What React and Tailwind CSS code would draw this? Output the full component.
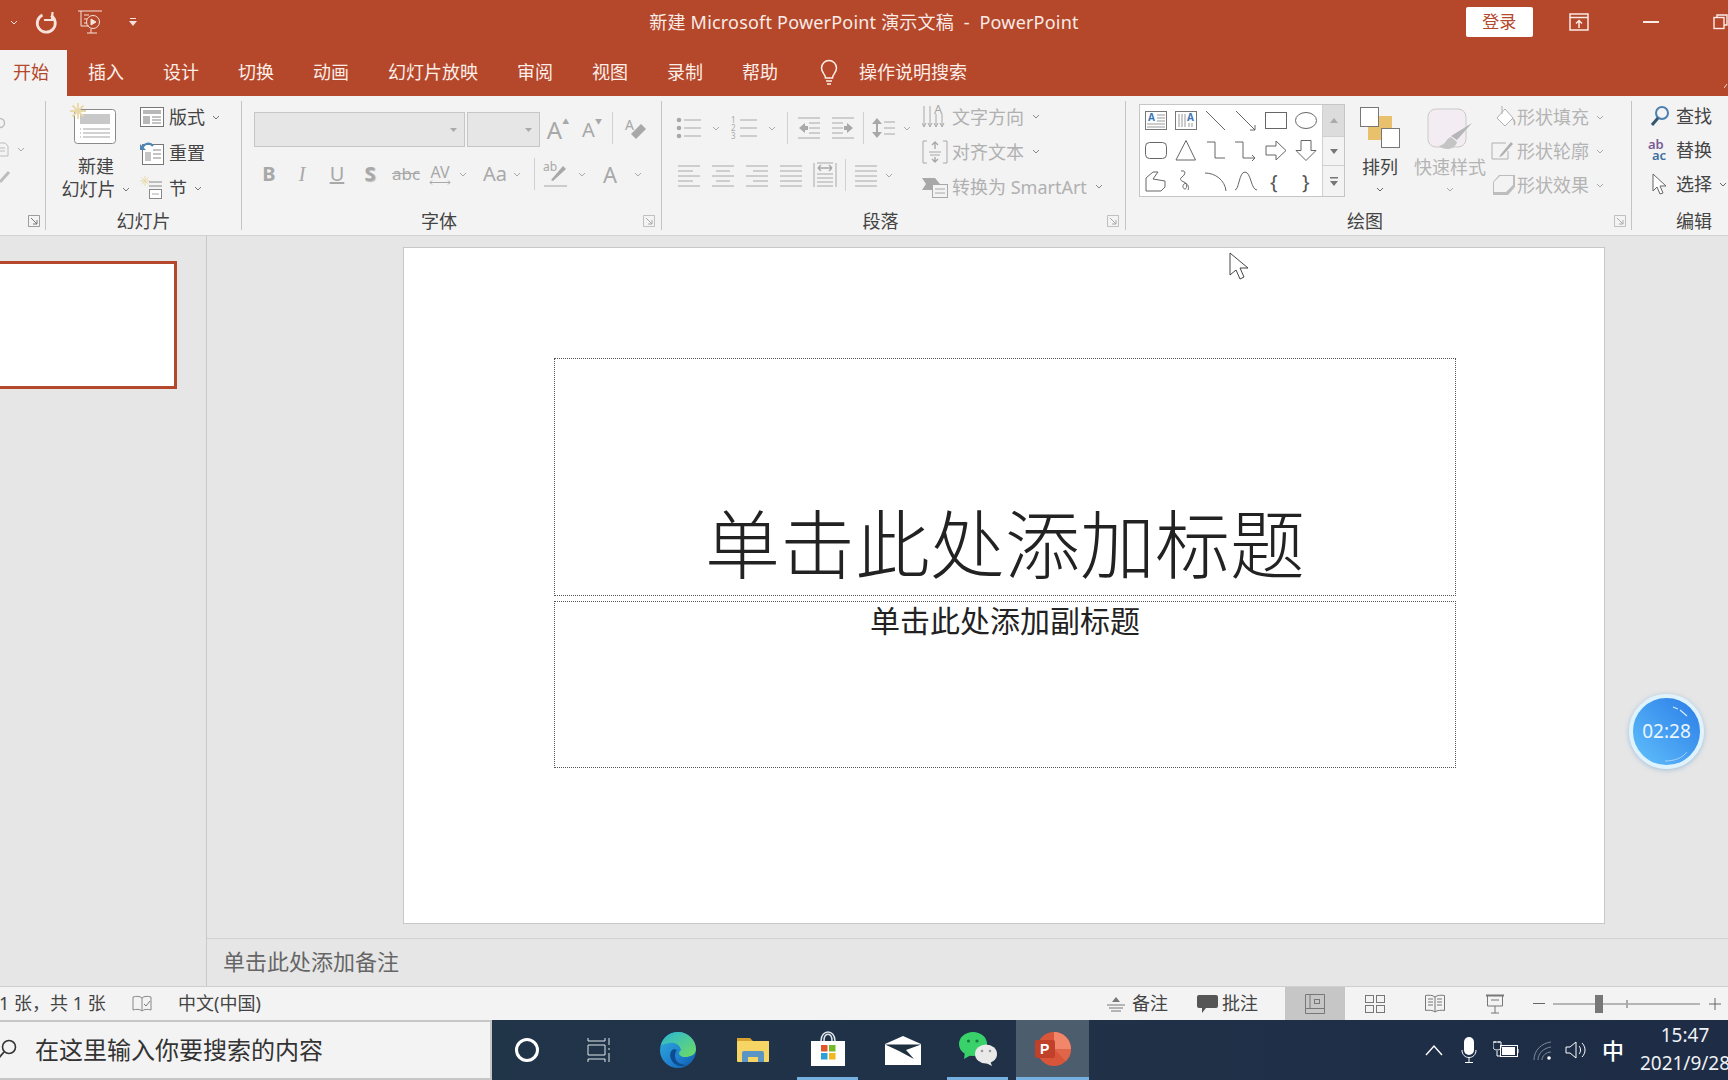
import React from 'react';

const Ico = ({ w = 24, h = 24, className = '', children }) => (
  <svg width={w} height={h} viewBox={`0 0 ${w} ${h}`} fill="none" stroke="currentColor" strokeWidth="1" className={`shrink-0 ${className}`}>
    {children}
  </svg>
);

const Chev = ({ className = 'text-[#777]', w = 16 }) => (
  <span className={`flex justify-center shrink-0 ${className}`} style={{ width: w }}>
    <svg width="8" height="5" viewBox="0 0 8 5" fill="none" stroke="currentColor"><path d="M1 1l3 3 3-3" /></svg>
  </span>
);

const Launcher = ({ className = 'text-[#aaa]' }) => (
  <Ico w={12} h={12} className={className}>
    <path d="M.5 .5h11v11h-11z" opacity=".7" /><path d="M3 3l6 6M9 5v4H5" />
  </Ico>
);

const Sep = ({ className = '' }) => <div className={`w-px bg-[#d0d0d0] shrink-0 ${className}`} />;
const GroupSep = () => <div className="w-px h-[129px] mt-[5px] bg-[#c4c4c4] shrink-0" />;

const GroupLabel = ({ children, launcher, className = '' }) => (
  <div className="h-[28px] flex items-center mt-auto">
    <div className={`flex-1 text-center text-[18px] leading-none text-[#444] ${className}`}>{children}</div>
    {launcher}
  </div>
);

const Lines = ({ rows, w = 24 }) => (
  <Ico w={w} h={24} className="text-[#a8a8a8]">
    {rows.map((r, i) => <path key={i} d={`M${r[0]} ${r[2]}H${r[1]}`} />)}
  </Ico>
);

// ---------- icons of the ribbon ----------
const NewSlideIcon = () => (
  <Ico w={48} h={42}>
    <rect x="4.5" y="6.5" width="41" height="34" rx="3" fill="#fff" stroke="#8a8a8a" />
    <rect x="10" y="11" width="30" height="10" fill="#c8c8c8" stroke="none" />
    <path d="M13 26h27M13 30h27M13 34h27M10 26h1M10 30h1M10 34h1" stroke="#a5a5a5" />
    <path d="M8 0v16M0 8h16M2.5 2.5l11 11M13.5 2.5l-11 11" stroke="#ead9a8" strokeWidth="1.800" />
  </Ico>
);
const LayoutIcon = () => (
  <Ico w={24} h={20}>
    <rect x=".5" y=".5" width="23" height="19" fill="#fff" stroke="#777" />
    <rect x="3" y="3" width="18" height="4" fill="#b8b8b8" stroke="none" />
    <rect x="3" y="9" width="7" height="8" fill="#b8b8b8" stroke="none" />
    <path d="M12 10h9M12 13h9M12 16h9" stroke="#888" />
  </Ico>
);
const ResetIcon = () => (
  <Ico w={24} h={24}>
    <rect x="2.5" y="3.5" width="21" height="20" fill="#fff" stroke="#777" />
    <path d="M13 9h8M13 13h8M13 17h8" stroke="#888" />
    <rect x="5" y="11" width="6" height="9" fill="#c5c5c5" stroke="none" />
    <path d="M2 8c2-6 8-7 11-3" stroke="#4f86b8" strokeWidth="2.200" /><path d="M0 3v6h6z" fill="#4f86b8" stroke="none" />
  </Ico>
);
const SectionIcon = () => (
  <Ico w={24} h={24}>
    <path d="M5 0v10M0 5h10M1.5 1.5l7 7M8.500 1.500l-7 7" stroke="#ead9a8" />
    <path d="M9 6h13M9 10h13" stroke="#888" />
    <rect x="9.500" y="13.500" width="12" height="9" fill="#fff" stroke="#888" /><path d="M12 18h7" stroke="#aaa" />
  </Ico>
);

const BulletIcon = () => (
  <Ico w={28} h={24} className="text-[#a8a8a8]">
    <circle cx="4" cy="4" r="2.300" fill="currentColor" stroke="none" /><circle cx="4" cy="12" r="2.300" fill="currentColor" stroke="none" /><circle cx="4" cy="20" r="2.300" fill="currentColor" stroke="none" />
    <path d="M9 4h17M9 12h17M9 20h17" />
  </Ico>
);
const NumberIcon = () => (
  <Ico w={28} h={24} className="text-[#a8a8a8]">
    <path d="M9 4h17M9 12h17M9 20h17" />
    <text x="0" y="7" fontSize="8" fill="currentColor" stroke="none">1</text>
    <text x="0" y="15" fontSize="8" fill="currentColor" stroke="none">2</text>
    <text x="0" y="23" fontSize="8" fill="currentColor" stroke="none">3</text>
  </Ico>
);
const IndentIcon = ({ flip }) => (
  <Ico w={24} h={24} className="text-[#a8a8a8]">
    <g transform={flip ? 'translate(24 0) scale(-1 1)' : undefined}>
      <path d="M1 2h22M12 7h11M12 12h11M12 17h11M1 22h22" />
      <path d="M2 12l6-5v3h3v4H8v3z" fill="currentColor" stroke="none" />
    </g>
  </Ico>
);
const SpacingIcon = () => (
  <Ico w={24} h={24} className="text-[#a8a8a8]">
    <path d="M5 4v16" strokeWidth="2" /><path d="M0 8l5-6 5 6zM0 16l5 6 5-6z" fill="currentColor" stroke="none" />
    <path d="M12 6h11M12 12h11M12 18h11" />
  </Ico>
);
const DistributeIcon = () => (
  <Ico w={24} h={26} className="text-[#a8a8a8]">
    <path d="M1 1v24M23 1v24M4 1h16M4 12h16M4 16h16M4 20h16M4 24h16" />
    <path d="M5 6h14M5 6l3-3M5 6l3 3M19 6l-3-3M19 6l-3 3" strokeWidth="1.400" />
  </Ico>
);
const TextDirIcon = () => (
  <Ico w={26} h={26} className="text-[#a8a8a8]">
    <path d="M2 2v20M8 2v20M14 10v12M20 10v12M0 19l2 4 2-4M6 19l2 4 2-4M12 19l2 4 2-4M18 19l2 4 2-4" />
    <text x="12" y="10" fontSize="13" fill="currentColor" stroke="none">A</text>
  </Ico>
);
const AlignTextIcon = () => (
  <Ico w={26} h={24} className="text-[#a8a8a8]">
    <path d="M5 1H1v22h4M21 1h4v22h-4M7 12h12M8 15h10" />
    <path d="M13 2v7M10 5l3-3 3 3M13 22v-5M10 19l3 3 3-3" strokeWidth="1.400" />
  </Ico>
);
const SmartArtIcon = () => (
  <Ico w={26} h={22} className="text-[#a8a8a8]">
    <path d="M0 2h13l5 6-5 6H0l4-6z" fill="currentColor" stroke="none" />
    <rect x="10.500" y="8.500" width="15" height="13" fill="#f3f3f3" /><path d="M13 13h10M13 17h10" />
  </Ico>
);

const shapes = [
  <g key="a"><rect x="2.500" y="3.500" width="21" height="18" fill="#fff" stroke="#777" /><text x="5" y="13" fontSize="10" fontWeight="700" fill="#3f76b8" stroke="none">A</text><path d="M14 7h8M14 10h8M14 13h8M4 16h18M4 19h18" stroke="#999" /></g>,
  <g key="b"><rect x="2.500" y="3.500" width="21" height="18" fill="#fff" stroke="#777" /><text x="14" y="13" fontSize="10" fontWeight="700" fill="#3f76b8" stroke="none">A</text><path d="M6 6v13M9 6v13M12 6v13M16 15v4M19 15v4" stroke="#999" /></g>,
  <path key="c" d="M3 3l19 19" />,
  <g key="d"><path d="M3 3l19 19" /><path d="M17 22h5v-5" /></g>,
  <rect key="e" x="2.500" y="4.500" width="21" height="16" />,
  <ellipse key="f" cx="13" cy="12.500" rx="10.500" ry="8" />,
  <rect key="g" x="2.500" y="4.500" width="21" height="16" rx="4" />,
  <path key="h" d="M13 2.500L22.500 22H3z" />,
  <path key="i" d="M4 4h8v16h10" />,
  <g key="j"><path d="M2 4h8v16h12M19 17l3 3-3 3" /></g>,
  <path key="k" d="M3 8h10V3l10 9.500L13 22v-5H3z" />,
  <path key="l" d="M8 2.500h10v10h5l-10 10-10-10h5z" />,
  <path key="m" d="M3 22V9l7-6h5l-5 7 12 2v6l-4 4z" />,
  <path key="n" d="M8 2c6-1 4 4 1 6-3 2-1 4 2 5 4 1 3 7 1 7s-3-3-1-5 6 2 4 6" />,
  <path key="o" d="M2 4c10 0 20 7 21 18" />,
  <path key="p" d="M2 21C6 21 6 3 12 3s6 18 12 18" />,
  <text key="q" x="7" y="20" fontSize="20" fill="#555" stroke="none">{'{'}</text>,
  <text key="r" x="9" y="20" fontSize="20" fill="#555" stroke="none">{'}'}</text>,
];

const Gallery = () => (
  <div className="flex w-[206px] h-[93px] ml-[13px] bg-white border border-[#c6c6c6] shrink-0">
    <div className="grid grid-cols-6 grid-rows-3 flex-1 px-[1px] text-[#666]">
      {shapes.map((s, i) => (
        <div key={i} className="flex items-center justify-center">
          <Ico w={26} h={24}>{s}</Ico>
        </div>
      ))}
    </div>
    <div className="w-[22px] flex flex-col border-l border-[#d0d0d0] bg-[#f3f3f3] text-[#777]">
      <div className="h-[32px] bg-[#dcdcdc] flex items-center justify-center border-b border-[#d0d0d0] text-[#aaa]">
        <svg width="8" height="5" viewBox="0 0 8 5" fill="currentColor"><path d="M4 0l4 5H0z" /></svg>
      </div>
      <div className="h-[29px] flex items-center justify-center border-b border-[#d0d0d0]">
        <svg width="8" height="5" viewBox="0 0 8 5" fill="currentColor"><path d="M4 5l4-5H0z" /></svg>
      </div>
      <div className="flex-1 flex items-center justify-center">
        <svg width="8" height="9" viewBox="0 0 8 9" fill="currentColor"><path d="M0 0h8v1.500H0zM4 9l4-5H0z" /></svg>
      </div>
    </div>
  </div>
);

const ArrangeIcon = () => (
  <Ico w={40} h={41}>
    <rect x="8" y="9" width="24" height="24" fill="#e9c06c" stroke="none" />
    <rect x=".5" y=".5" width="18" height="19" fill="#fff" stroke="#777" />
    <rect x="21.500" y="21.500" width="18" height="19" fill="#fff" stroke="#777" />
  </Ico>
);
const QuickStyleIcon = () => (
  <Ico w={46} h={47}>
    <rect x="1" y="1" width="38" height="38" rx="8" fill="#f3edf3" stroke="#c9c9c9" />
    <path d="M45 15L30 32l-6-4z" fill="#b6b6b6" stroke="none" />
    <path d="M24 29c-5 1-5 8-12 9 6 5 16 4 18-4z" fill="#c4c4c4" stroke="none" />
  </Ico>
);
const FillIcon = () => (
  <Ico w={26} h={24} className="text-[#b0b0b0]">
    <path d="M14 4l8 9-8 8-8-8z" fill="#fff" /><path d="M11 1v8" /><path d="M22 14c2 2 2 5 1 6" strokeWidth="1.500" />
  </Ico>
);
const OutlineIcon = () => (
  <Ico w={26} h={24} className="text-[#b0b0b0]">
    <path d="M15 4H1v16h16v-8" /><path d="M10 15l-2 3 3-1L22 5l-2-2z" fill="currentColor" stroke="none" />
  </Ico>
);
const EffectIcon = () => (
  <Ico w={26} h={24} className="text-[#b0b0b0]">
    <path d="M8 2h16v12l-7 8H2V9z" fill="#bdbdbd" stroke="none" /><path d="M9 3h13v9l-7 7H3V9z" fill="#f3f3f3" stroke="none" />
  </Ico>
);

// ---------- tabs ----------
const tabs = ['插入', '设计', '切换', '动画', '幻灯片放映', '审阅', '视图', '录制', '帮助'];

const TitleBar = () => (
  <div className="h-[50px] grid grid-cols-[minmax(0,1fr)_auto_minmax(0,1fr)] items-center pb-[6px] text-white shrink-0">
    <div className="flex items-center text-[#f6e3dc]">
      <Chev w={10} className="ml-[9px] text-[#f6e3dc]" />
      <Ico w={24} h={24} className="ml-[15px]">
        <path d="M8.500 5A9 9 0 1 0 17 5.500" strokeWidth="2.800" /><path d="M18.500 2l-.5 8h-8" strokeWidth="2.200" />
      </Ico>
      <Ico w={26} h={26} className="ml-[19px]">
        <path d="M1 2h24M4 2v15h8M7 6h5M7 10h3M7 14h3M10 24h10M14 20v4" /><circle cx="16" cy="13" r="6.500" /><path d="M14 10l5 3-5 3z" fill="currentColor" />
      </Ico>
      <span className="ml-[25px]">
        <svg width="10" height="11" viewBox="0 0 10 11" fill="currentColor"><path d="M2 1h6v1H2zM1 4h8L5 9z" /></svg>
      </span>
    </div>
    <div className="text-[18px] tracking-[0.2px] leading-none text-[#f9ebe6] whitespace-pre">新建 Microsoft PowerPoint 演示文稿  -  PowerPoint</div>
    <div className="flex items-center pl-[387px] whitespace-nowrap text-[#f9ebe6]">
      <div className="w-[67px] h-[30px] bg-white rounded-[2px] flex items-center justify-center text-[17px] text-[#b5472a] shrink-0">登录</div>
      <Ico w={20} h={18} className="ml-[36px]">
        <path d="M1 1h18v16H1zM1 4.500h18" strokeWidth="1.500" /><path d="M10 15V8M7 10.500l3-3 3 3" strokeWidth="1.500" />
      </Ico>
      <div className="w-[16px] h-[2px] bg-current ml-[54px] shrink-0" />
      <Ico w={16} h={16} className="ml-[54px]">
        <path d="M4 3V1h10v10h-3" strokeWidth="1.400" /><rect x="1" y="3.500" width="10" height="11" strokeWidth="1.400" />
      </Ico>
    </div>
  </div>
);

const TabBar = () => (
  <div className="h-[46px] flex items-stretch text-[18px] text-[#fbeee9] shrink-0">
    <div className="w-[67px] pl-[13px] pb-[2px] flex items-center bg-[#f3f3f3] text-[#b5472a]">开始</div>
    <div className="flex items-center gap-[39px] ml-[21px] pb-[2px]">
      {tabs.map((t) => <span key={t}>{t}</span>)}
    </div>
    <div className="flex items-center ml-[39px] pb-[2px]">
      <Ico w={24} h={28}>
        <path d="M8.500 20c0-4-4-5-4-10a7.500 7.500 0 0 1 15 0c0 5-4 6-4 10zM9 23h6M10 26h4" strokeWidth="1.500" />
      </Ico>
      <span className="ml-[18px]">操作说明搜索</span>
    </div>
    <svg className="ml-auto mt-[33px]" width="4" height="6" viewBox="0 0 4 6" fill="none" stroke="#f0d9d0"><path d="M0 5l3-4" /></svg>
  </div>
);

const TextRow = ({ icon, label, chev = true, className = '' }) => (
  <div className="flex items-center h-[35px]">
    <span className="flex items-center justify-center w-[24px] shrink-0">{icon}</span>
    <span className={`ml-[5px] text-[18px] leading-none whitespace-nowrap ${className}`}>{label}</span>
    {chev && <Chev w={24} className="text-[#888]" />}
  </div>
);

const Glyph = ({ w, className = '', children }) => (
  <span className={`flex items-center justify-center shrink-0 ${className}`} style={{ width: w }}>{children}</span>
);

const ShapeRow = ({ icon, label }) => (
  <div className="flex items-center h-[34px]">
    <span className="pl-[3px] shrink-0">{icon}</span>
    <span className="text-[18px] leading-none whitespace-nowrap">{label}</span>
    <Chev w={22} className="text-[#aaa]" />
  </div>
);

const Ribbon = () => (
  <div className="h-[140px] bg-[#f3f3f3] border-b border-[#d2d2d2] flex shrink-0 text-[#444]">
    {/* clipped clipboard group */}
    <div className="w-[45px] flex flex-col shrink-0 text-[#bdbdbd]">
      <Ico w={6} h={12} className="mt-[21px]"><circle cx="0" cy="6" r="4.500" strokeWidth="1.500" /></Ico>
      <div className="flex items-center mt-[11px] h-[18px]">
        <Ico w={12} h={18}><path d="M0 3h5l3 3v10H0M0 8h5M0 11h5" /></Ico>
        <Chev className="ml-[1px] text-[#aaa]" />
      </div>
      <Ico w={12} h={14} className="mt-[12px]"><path d="M0 12l9-10" strokeWidth="3" /></Ico>
      <GroupLabel launcher={<span className="mr-[5px]"><Launcher className="text-[#777]" /></span>} />
    </div>
    <GroupSep />

    {/* 幻灯片 */}
    <div className="w-[195px] flex flex-col shrink-0">
      <div className="flex">
        <div className="w-[100px] flex flex-col items-center pt-[7px] shrink-0">
          <span className="-ml-[5px]"><NewSlideIcon /></span>
          <span className="text-[18px] leading-[23px] mt-[10px]">新建</span>
          <span className="flex items-center text-[18px] leading-[23px] ml-[5px]">幻灯片<Chev w={20} /></span>
        </div>
        <div className="flex flex-col pt-[3px] -ml-[6px]">
          <div className="flex items-center h-[36px]"><LayoutIcon /><span className="ml-[5px] text-[18px] leading-none">版式</span><Chev w={22} /></div>
          <div className="flex items-center h-[35px]"><ResetIcon /><span className="ml-[5px] text-[18px] leading-none">重置</span></div>
          <div className="flex items-center h-[36px]"><SectionIcon /><span className="ml-[5px] text-[18px] leading-none">节</span><Chev w={22} /></div>
        </div>
      </div>
      <GroupLabel>幻灯片</GroupLabel>
    </div>
    <GroupSep />

    {/* 字体 */}
    <div className="w-[419px] flex flex-col shrink-0">
      <div className="pl-[12px] pt-[16px] text-[#a8a8a8]">
        <div className="flex h-[35px]">
          <div className="w-[211px] bg-[#e6e6e6] border border-[#c6c6c6] flex items-center justify-end pr-[7px] shrink-0">
            <svg width="7" height="4" viewBox="0 0 7 4" fill="#aaa"><path d="M0 0h7L3.500 4z" /></svg>
          </div>
          <div className="w-[73px] ml-[2px] bg-[#e6e6e6] border border-[#c6c6c6] flex items-center justify-end pr-[7px] shrink-0">
            <svg width="7" height="4" viewBox="0 0 7 4" fill="#aaa"><path d="M0 0h7L3.500 4z" /></svg>
          </div>
          <Glyph w={32} className="ml-[2px] text-[24px] leading-none">A<sup className="text-[7px] -mt-[8px]">▲</sup></Glyph>
          <Glyph w={32} className="ml-[2px] text-[20px] leading-none">A<sup className="text-[7px] -mt-[8px]">▼</sup></Glyph>
          <Sep className="ml-[4px] h-[32px]" />
          <Ico w={24} h={26} className="ml-[11px] mt-[5px]">
            <text x="1" y="13" fontSize="14" fill="currentColor" stroke="none">A</text>
            <path d="M12 22l10-10-5-5-10 10z" fill="currentColor" stroke="none" />
          </Ico>
        </div>
        <div className="flex items-center h-[34px] mt-[10px]">
          <Glyph w={30} className="text-[20px] font-bold">B</Glyph>
          <Glyph w={36} className="text-[20px] italic font-['Liberation_Serif',serif]">I</Glyph>
          <Glyph w={34} className="text-[20px] underline">U</Glyph>
          <Glyph w={32} className="text-[20px] font-bold [text-shadow:1px_1px_1px_#bbb]">S</Glyph>
          <Glyph w={40} className="text-[17px] line-through">abc</Glyph>
          <Glyph w={28} className="text-[16px] leading-none flex-col">AV<svg width="22" height="5" viewBox="0 0 22 5" fill="none" stroke="currentColor"><path d="M1 2.500h20M3 .5l-2 2 2 2M19 .5l2 2-2 2" /></svg></Glyph>
          <Chev w={18} className="text-[#aaa]" />
          <Glyph w={24} className="ml-[11px] text-[20px]">Aa</Glyph>
          <Chev w={20} className="text-[#aaa]" />
          <Sep className="ml-[7px] h-[32px]" />
          <Ico w={24} h={28} className="ml-[8px]">
            <text x="0" y="11" fontSize="12" fill="currentColor" stroke="none">ab</text>
            <path d="M8 20L20 6l3 3-13 12z" fill="currentColor" stroke="none" /><path d="M1 26h23" strokeWidth="2" stroke="#ccc" />
          </Ico>
          <Chev w={20} className="ml-[5px] text-[#aaa]" />
          <Glyph w={24} className="ml-[6px] text-[22px]">A</Glyph>
          <Chev w={20} className="ml-[6px] text-[#aaa]" />
        </div>
      </div>
      <GroupLabel className="pr-[7px]" launcher={<span className="mr-[6px]"><Launcher /></span>}>字体</GroupLabel>
    </div>
    <GroupSep />

    {/* 段落 */}
    <div className="w-[463px] flex flex-col shrink-0">
      <div className="flex">
        <div className="w-[261px] pt-[16px] shrink-0">
          <div className="flex items-center h-[32px]">
            <span className="ml-[13px]"><BulletIcon /></span><Chev className="ml-[5px] text-[#aaa]" />
            <span className="ml-[7px]"><NumberIcon /></span><Chev className="ml-[5px] text-[#aaa]" />
            <Sep className="ml-[7px] h-[32px]" />
            <span className="ml-[9px]"><IndentIcon /></span>
            <span className="ml-[10px]"><IndentIcon flip /></span>
            <Sep className="ml-[8px] h-[32px]" />
            <span className="ml-[8px]"><SpacingIcon /></span><Chev className="ml-[3px] text-[#aaa]" />
          </div>
          <div className="flex items-center h-[32px] mt-[15px]">
            <span className="ml-[15px]"><Lines rows={[[1, 23, 3], [1, 16, 8], [1, 23, 13], [1, 16, 18], [1, 23, 23]]} /></span>
            <span className="ml-[10px]"><Lines rows={[[1, 23, 3], [5, 19, 8], [1, 23, 13], [5, 19, 18], [1, 23, 23]]} /></span>
            <span className="ml-[10px]"><Lines rows={[[1, 23, 3], [8, 23, 8], [1, 23, 13], [8, 23, 18], [1, 23, 23]]} /></span>
            <span className="ml-[10px]"><Lines rows={[[1, 23, 3], [1, 23, 8], [1, 23, 13], [1, 23, 18], [1, 23, 23]]} /></span>
            <span className="ml-[10px]"><DistributeIcon /></span>
            <Sep className="ml-[8px] h-[32px]" />
            <span className="ml-[8px]"><Lines rows={[[1, 23, 3], [1, 23, 8], [1, 23, 13], [1, 23, 18], [1, 23, 23]]} /></span>
            <Chev className="ml-[3px] text-[#aaa]" />
          </div>
        </div>
        <div className="pt-[3px] text-[#b0b0b0] flex flex-col">
          <TextRow icon={<TextDirIcon />} label="文字方向" />
          <TextRow icon={<AlignTextIcon />} label="对齐文本" />
          <TextRow icon={<SmartArtIcon />} label="转换为 SmartArt" />
        </div>
      </div>
      <GroupLabel className="pr-[8px]" launcher={<span className="mr-[6px]"><Launcher /></span>}>段落</GroupLabel>
    </div>
    <GroupSep />

    {/* 绘图 */}
    <div className="w-[505px] flex flex-col shrink-0">
      <div className="flex pt-[8px]">
        <Gallery />
        <div className="w-[60px] ml-[5px] flex flex-col items-center pt-[3px] shrink-0">
          <ArrangeIcon />
          <span className="text-[18px] leading-[23px] mt-[8px]">排列</span>
          <Chev className="mt-[8px] text-[#666]" />
        </div>
        <div className="w-[72px] ml-[4px] flex flex-col items-center pt-[4px] text-[#b4b4b4] shrink-0">
          <QuickStyleIcon />
          <span className="text-[18px] leading-[23px] whitespace-nowrap mt-[1px]">快速样式</span>
          <Chev className="mt-[8px] text-[#aaa]" />
        </div>
        <div className="flex flex-col -mt-[4px] ml-[2px] text-[#b4b4b4]">
          <ShapeRow icon={<FillIcon />} label="形状填充" />
          <ShapeRow icon={<OutlineIcon />} label="形状轮廓" />
          <ShapeRow icon={<EffectIcon />} label="形状效果" />
        </div>
      </div>
      <GroupLabel className="pr-[10px]" launcher={<span className="mr-[5px]"><Launcher /></span>}>绘图</GroupLabel>
    </div>
    <GroupSep />

    {/* 编辑 */}
    <div className="w-[124px] flex flex-col shrink-0">
      <div className="pl-[16px] pt-[3px] flex flex-col">
        <div className="flex items-center h-[34px]">
          <Ico w={24} h={24}><circle cx="14" cy="9" r="6" stroke="#4c7fb0" strokeWidth="2" /><path d="M10 14l-6 7" stroke="#33566f" strokeWidth="3" /></Ico>
          <span className="ml-[4px] text-[18px] leading-none">查找</span>
        </div>
        <div className="flex items-center h-[34px]">
          <span className="w-[24px] shrink-0 flex flex-col text-[13px] leading-[11px] font-semibold"><span className="text-[#7a5a96]">ab</span><span className="text-[#3d6f9e] ml-[4px]">ac</span></span>
          <span className="ml-[4px] text-[18px] leading-none">替换</span>
        </div>
        <div className="flex items-center h-[34px]">
          <Ico w={24} h={24}><path d="M5 2v17l4-4 3 7 3-1-3-7h6z" fill="#fff" stroke="#666" /></Ico>
          <span className="ml-[4px] text-[18px] leading-none">选择</span>
          <Chev w={22} className="text-[#666]" />
        </div>
      </div>
      <GroupLabel>编辑</GroupLabel>
    </div>
  </div>
);

const Workspace = () => (
  <div className="flex-1 flex min-h-0 bg-[#e6e6e6]">
    <div className="w-[207px] border-r border-[#c8c8c8] shrink-0 pt-[25px]">
      <div className="w-[177px] h-[128px] bg-white border-y-[3px] border-r-[3px] border-[#b5472a]" />
    </div>
    <div className="flex-1 flex flex-col min-w-0">
      <div className="flex-1 pt-[11px] pl-[196px]">
        <div className="w-[1202px] h-[677px] bg-white border border-[#c8c8c8] pt-[110px] pl-[150px]">
          <div className="w-[902px] h-[238px] border border-dotted border-[#555] flex items-end justify-center pb-[6px]">
            <span className="text-[75px] leading-[90px] font-light text-[#222]">单击此处添加标题</span>
          </div>
          <div className="w-[902px] h-[167px] mt-[5px] border border-dotted border-[#555] flex justify-center">
            <span className="text-[30px] leading-[38px] text-[#222]">单击此处添加副标题</span>
          </div>
        </div>
      </div>
      <div className="h-[48px] border-t border-[#d2d2d2] flex items-center pl-[16px] pb-[2px] text-[22px] text-[#666] shrink-0">单击此处添加备注</div>
    </div>
  </div>
);

const StatusBar = () => (
  <div className="h-[34px] bg-[#f3f3f3] border-t border-[#cfcfcf] flex items-stretch text-[18px] text-[#444] shrink-0">
    <div className="flex items-center -ml-[1px]">
      <span className="w-[107px] whitespace-pre">1 张，共 1 张</span>
      <Ico w={20} h={18} className="ml-[26px] text-[#888]">
        <path d="M10 3C8 1 4 1 1 2v13c3-1 7-1 9 1 2-2 6-2 9-1V2c-3-1-7-1-9 1zM10 3v13" /><path d="M12 9l2 2 4-5" stroke="#777" />
      </Ico>
      <span className="ml-[26px]">中文(中国)</span>
    </div>
    <div className="flex items-center ml-auto pr-[7px]">
      <Ico w={18} h={16}>
        <path d="M9 1l4 5H5z" fill="#777" stroke="none" /><path d="M0 9h18M2 12h14M4 15h10" stroke="#777" />
      </Ico>
      <span className="ml-[7px]">备注</span>
      <Ico w={22} h={22} className="ml-[28px]">
        <path d="M3 2h17a2 2 0 0 1 2 2v9a2 2 0 0 1-2 2H10l-4 5v-5H3a2 2 0 0 1-2-2V4a2 2 0 0 1 2-2z" fill="#555" stroke="none" />
      </Ico>
      <span className="ml-[4px]">批注</span>
      <div className="flex self-stretch ml-[27px] text-[#777]">
        <div className="w-[60px] bg-[#c6c6c6] flex items-center justify-center">
          <Ico w={20} h={20}><path d="M.5 .5h19v19H.5zM5 .5v14M.5 14.500h19" /><rect x="9.500" y="5.500" width="5" height="4" /></Ico>
        </div>
        <div className="w-[60px] flex items-center justify-center">
          <Ico w={20} h={20}><rect x=".5" y="1.500" width="8" height="7" /><rect x="11.500" y="1.500" width="8" height="7" /><rect x=".5" y="11.500" width="8" height="7" /><rect x="11.500" y="11.500" width="8" height="7" /></Ico>
        </div>
        <div className="w-[60px] flex items-center justify-center">
          <Ico w={20} h={20}><path d="M10 3C8 1 3 1 .5 1.500v15C3 16 8 16 10 18c2-2 7-2 9.500-1.500v-15C17 1 12 1 10 3zM10 3v15M3 5h5M3 8h5M3 11h5M12 5h5M12 8h5M12 11h5" /></Ico>
        </div>
        <div className="w-[60px] flex items-center justify-center">
          <Ico w={20} h={20}><path d="M1 1.500h18" strokeWidth="2" /><path d="M2.500 2v10h15V2M6 6h8M10 12v7M6 19h8" /></Ico>
        </div>
      </div>
      <div className="w-[12px] h-px bg-[#666] ml-[8px]" />
      <div className="w-[147px] h-full ml-[8px] flex items-center relative">
        <div className="w-full h-[2px] bg-[#b5b5b5]" />
        <div className="absolute left-[42px] top-[8px] w-[8px] h-[18px] bg-[#777]" />
        <div className="absolute left-[73px] top-[13px] w-[2px] h-[8px] bg-[#aaa]" />
      </div>
      <Ico w={12} h={12} className="ml-[9px] text-[#666]"><path d="M0 6h12M6 0v12" /></Ico>
    </div>
  </div>
);

const EdgeIcon = () => (
  <svg width="36" height="38" viewBox="0 0 36 38" className="shrink-0">
    <defs>
      <linearGradient id="edgeA" x1="0" y1="0" x2="1" y2="1"><stop offset="0" stopColor="#2fb0d9" /><stop offset=".6" stopColor="#1f7fd0" /><stop offset="1" stopColor="#0d5aa7" /></linearGradient>
      <linearGradient id="edgeB" x1="0" y1="0" x2="1" y2="1"><stop offset="0" stopColor="#2ab5d8" /><stop offset="1" stopColor="#6fdc5f" /></linearGradient>
    </defs>
    <circle cx="18" cy="19" r="18" fill="url(#edgeA)" />
    <path d="M1 14C4 4 12 1 18 1c10 0 18 8 18 17 0 6-6 8-11 8-4 0-6-2-6-4 0-1 1-2 2-3-1-5-6-8-11-7-4 .5-8 2-9 2z" fill="url(#edgeB)" />
    <path d="M14 18c-3 1-5 5-3 10 2 5 8 9 16 6-8 0-12-4-12-9 0-3 1-5 2-6z" fill="#0d4d8f" />
  </svg>
);
const FolderIcon = () => (
  <svg width="34" height="28" viewBox="0 0 34 28" className="shrink-0">
    <path d="M1 2h13l3 3h16v2H1z" fill="#d9a22e" />
    <rect x="1" y="5" width="32" height="21" rx="1" fill="#f7d565" />
    <path d="M6 26v-9a2 2 0 0 1 2-2h18a2 2 0 0 1 2 2v9h-6v-5H12v5z" fill="#5a95c4" />
  </svg>
);
const StoreIcon = () => (
  <svg width="36" height="36" viewBox="0 0 36 36" className="shrink-0">
    <path d="M11 10c0-12 14-12 14 0M14 10c0-9 8-9 8 0" fill="none" stroke="#dfe6ea" strokeWidth="1.500" />
    <path d="M1 10h34v25H1z" fill="#fff" />
    <rect x="11" y="14" width="6.500" height="6.500" fill="#e0572c" /><rect x="19" y="14" width="6.500" height="6.500" fill="#76b82a" />
    <rect x="11" y="22" width="6.500" height="6.500" fill="#2a9fd8" /><rect x="19" y="22" width="6.500" height="6.500" fill="#f2b91c" />
  </svg>
);
const MailIcon = () => (
  <svg width="36" height="29" viewBox="0 0 36 29" className="shrink-0">
    <path d="M18 0l18 8v21H0V8z" fill="#fff" />
    <path d="M0 8.500h36L21 14l8 9-16-8.500z" fill="#1f3040" />
  </svg>
);
const WechatIcon = () => (
  <svg width="38" height="34" viewBox="0 0 38 34" className="shrink-0">
    <ellipse cx="14" cy="12" rx="14" ry="12" fill="#38d16a" />
    <path d="M6 20l-1 7 7-4z" fill="#38d16a" />
    <circle cx="9.500" cy="9" r="1.600" fill="#1a7a3c" /><circle cx="18" cy="9" r="1.600" fill="#1a7a3c" />
    <ellipse cx="27" cy="22" rx="11" ry="9.500" fill="#e9e9e9" />
    <path d="M31 29l2 5-6-3z" fill="#e9e9e9" />
    <circle cx="23" cy="19" r="1.300" fill="#999" /><circle cx="31" cy="19" r="1.300" fill="#999" />
  </svg>
);
const PptIcon = () => (
  <svg width="36" height="34" viewBox="0 0 36 34" className="shrink-0">
    <circle cx="19" cy="17" r="17" fill="#d9553a" />
    <path d="M19 0a17 17 0 0 1 17 17H19z" fill="#f2866a" />
    <path d="M19 17h17a17 17 0 0 1-5 12z" fill="#e0664a" />
    <rect x="0" y="8" width="20" height="18" rx="2" fill="#c0402a" />
    <text x="5" y="22" fontSize="14" fontWeight="700" fill="#fff" fontFamily="Liberation Sans, sans-serif">P</text>
  </svg>
);

const AppCell = ({ w, ml = '', active, open, children }) => (
  <div className={`h-full flex items-center justify-center shrink-0 ${ml} ${active ? 'bg-[#4c5d6d]' : ''} ${open ? 'border-b-[3px] border-[#76b0e0]' : ''}`} style={{ width: w }}>
    {children}
  </div>
);

const Taskbar = () => (
  <div className="h-[60px] flex shrink-0 bg-gradient-to-r from-[#22384a] to-[#1e2c46] text-white">
    <div className="w-[492px] bg-[#f3f3f3] border-y-2 border-r-2 border-[#c6c6c6] flex items-center shrink-0">
      <Ico w={20} h={24} className="-ml-[3px] text-[#333]"><circle cx="12" cy="9" r="6.500" strokeWidth="1.600" /><path d="M7 14l-6 7" strokeWidth="1.800" /></Ico>
      <span className="ml-[18px] text-[24px] leading-none text-[#333]">在这里输入你要搜索的内容</span>
    </div>
    <div className="w-[24px] h-[24px] ml-[23px] mt-[18px] rounded-full border-[3px] border-white shrink-0" />
    <Ico w={24} h={26} className="ml-[48px] mt-[17px] text-[#dfe6ea]">
      <path d="M1 1v3h17V1M1 25v-3h17v3M1 8h17v10H1zM22 1v7M22 11v2M22 16v9" />
    </Ico>
    <AppCell w={75} ml="ml-[29px]"><EdgeIcon /></AppCell>
    <AppCell w={75}><FolderIcon /></AppCell>
    <AppCell w={61} ml="ml-[7px]" open><StoreIcon /></AppCell>
    <AppCell w={75} ml="ml-[7px]"><MailIcon /></AppCell>
    <AppCell w={61} ml="ml-[7px]" open><WechatIcon /></AppCell>
    <AppCell w={73} ml="ml-[8px]" active open><PptIcon /></AppCell>
    <Ico w={18} h={12} className="ml-[336px] mt-[24px]"><path d="M1 11l8-9 8 9" strokeWidth="1.400" /></Ico>
    <Ico w={16} h={26} className="ml-[18px] mt-[17px]">
      <rect x="3" y="0" width="10" height="18" rx="5" fill="#fff" stroke="none" /><path d="M1 13c0 10 14 10 14 0M8 20v5M4 25.500h8" />
    </Ico>
    <Ico w={26} h={18} className="ml-[16px] mt-[21px]">
      <path d="M0 1h8v5c0 4-8 4-8 0zM2 0v2M6 0v2M4 10v5h3" /><rect x="7.500" y="4.500" width="17" height="11" /><rect x="9" y="6" width="13" height="8" fill="#fff" stroke="none" /><path d="M25 8v4" />
    </Ico>
    <Ico w={20} h={20} className="ml-[14px] mt-[21px] text-[#7f8a98]">
      <path d="M1 19C1 9 9 2 18 1M5 19c0-7 6-12 13-13M9 19c0-4 4-8 9-8" /><circle cx="16" cy="17" r="1.800" fill="#fff" stroke="none" />
    </Ico>
    <Ico w={22} h={20} className="ml-[12px] mt-[20px]">
      <path d="M1 7h4l6-5v16l-6-5H1zM14 6c2 2 2 6 0 8M17 3c4 4 4 10 0 14" />
    </Ico>
    <span className="w-[22px] ml-[15px] text-[22px] leading-[60px] font-medium shrink-0">中</span>
    <div className="w-[92px] ml-[15px] flex flex-col items-center text-[19px] leading-none text-[#eef1f4] shrink-0 pt-[6px] whitespace-nowrap">
      <span>15:47</span>
      <span className="mt-[9px]">2021/9/28</span>
    </div>
  </div>
);

export default function App() {
  return (
    <div className="relative w-[1728px] h-[1080px] overflow-hidden flex flex-col bg-[#b5472a] font-['Noto_Sans','Noto_Sans_CJK_SC',sans-serif]">
      <TitleBar />
      <TabBar />
      <Ribbon />
      <Workspace />
      <StatusBar />
      <Taskbar />

      {/* 倒计时悬浮球 */}
      <div className="absolute left-[1629px] top-[694px] w-[75px] h-[75px] rounded-full border-[4px] border-[#dff3fd] bg-gradient-to-bl from-[#2b7be6] to-[#62c0fb] flex items-center justify-center text-[19px] text-[#eaf6ff] shadow-[0_1px_5px_rgba(90,150,210,.5)]">
        02:28
        <svg className="absolute inset-0" width="67" height="67" viewBox="0 0 67 67" fill="none" stroke="#d5ecfd">
          <path d="M40 9l5 2M47 12l7 6" strokeWidth="1.200" />
          <path d="M32 63c10 0 17-3 22-9" strokeWidth="1" opacity=".6" />
        </svg>
      </div>

      {/* 鼠标指针 */}
      <svg className="absolute left-[1229px] top-[252px]" width="20" height="28" viewBox="0 0 20 28">
        <path d="M1 1v22l6-5 4 9 4-2-4-9h8z" fill="#fff" stroke="#444" />
      </svg>
    </div>
  );
}
